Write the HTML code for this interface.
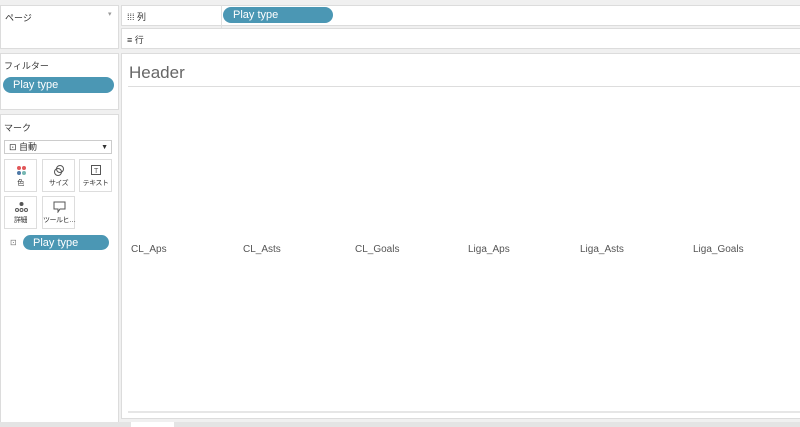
<!DOCTYPE html>
<html><head><meta charset="utf-8"><style>
body{margin:0;width:800px;height:427px;background:#f0f0f0;position:relative;overflow:hidden;font-family:"Liberation Sans","Noto Sans CJK JP",sans-serif;color:#333}
.b{position:absolute;background:#fff;border:1px solid #dcdcdc;box-sizing:border-box}
.pill{position:absolute;background:#4b97b4;color:#fff;border-radius:9px;font-size:11px;height:16px;line-height:16px;padding-left:10px;box-sizing:border-box;display:flex;align-items:center}
.t{position:absolute;font-size:9px;color:#333;white-space:nowrap}
.card{position:absolute;width:33px;height:33px;background:#fff;border:1px solid #ddd;box-sizing:border-box;font-size:7px;text-align:center}
.card span{position:absolute;left:0;right:0;bottom:3px;white-space:nowrap;font-size:7px;letter-spacing:-0.5px}
.lab{position:absolute;top:244px;font-size:10px;color:#555}
</style></head><body>
<div class="b" style="left:0;top:5px;width:119px;height:44px"></div>
<div class="t" style="left:5px;top:11px">ページ</div>
<div class="t" style="left:108px;top:10px;font-size:7px;color:#999">▾</div>
<div class="b" style="left:0;top:53px;width:119px;height:57px"></div>
<div class="t" style="left:4px;top:59px">フィルター</div>
<div class="pill" style="left:3px;top:77px;width:111px">Play type</div>
<div class="b" style="left:0;top:114px;width:119px;height:310px"></div>
<div class="t" style="left:4px;top:121px">マーク</div>
<div style="position:absolute;left:4px;top:140px;width:108px;height:14px;border:1px solid #ccc;background:#fff;box-sizing:border-box;font-size:9px;line-height:12px;padding-left:4px">⊡ 自動<span style="position:absolute;right:3px;top:1px;font-size:7px">▼</span></div>
<div class="card" style="left:4px;top:159px"><svg style="position:absolute;left:11px;top:5px" width="11" height="11"><circle cx="3" cy="3" r="2" fill="#e15759"/><circle cx="8" cy="3" r="2" fill="#e15759"/><circle cx="3" cy="8" r="2" fill="#4e79a7"/><circle cx="8" cy="8" r="2" fill="#76b7b2"/></svg><span>色</span></div>
<div class="card" style="left:42px;top:159px"><svg style="position:absolute;left:10px;top:4px" width="13" height="13" fill="none" stroke="#555"><circle cx="7" cy="5" r="3.5"/><circle cx="5" cy="8" r="3.5"/></svg><span>サイズ</span></div>
<div class="card" style="left:79px;top:159px"><svg style="position:absolute;left:11px;top:5px" width="11" height="11" fill="none" stroke="#555"><rect x="0.5" y="0.5" width="9" height="9"/><text x="3" y="8" font-size="7" fill="#555" stroke="none">T</text></svg><span>テキスト</span></div>
<div class="card" style="left:4px;top:196px"><svg style="position:absolute;left:10px;top:5px" width="13" height="11" fill="none" stroke="#555"><circle cx="6.5" cy="2" r="1.5" fill="#555"/><circle cx="2" cy="8" r="1.5"/><circle cx="6.5" cy="8" r="1.5"/><circle cx="11" cy="8" r="1.5"/></svg><span>詳細</span></div>
<div class="card" style="left:42px;top:196px"><svg style="position:absolute;left:10px;top:4px" width="13" height="12" fill="none" stroke="#555"><path d="M1 1h11v7H7l-2 3V8H1z"/></svg><span>ツールヒ…</span></div>
<div class="t" style="left:10px;top:238px;font-size:8px;color:#777">⊡</div>
<div class="pill" style="left:23px;top:235px;width:86px;height:15px">Play type</div>
<div class="b" style="left:121px;top:5px;width:680px;height:21px"></div>
<div style="position:absolute;left:221px;top:5px;width:1px;height:43px;background:#e0e0e0"></div>
<div class="t" style="left:127px;top:10px">⁞⁞⁞ 列</div>
<div class="pill" style="left:223px;top:7px;width:110px">Play type</div>
<div class="b" style="left:121px;top:28px;width:680px;height:21px"></div>
<div class="t" style="left:127px;top:33px">≡ 行</div>
<div class="b" style="left:121px;top:53px;width:680px;height:366px"></div>
<div style="position:absolute;left:129px;top:63px;font-size:17px;color:#666">Header</div>
<div style="position:absolute;left:128px;top:86px;width:672px;height:1px;background:#ddd"></div>
<div style="position:absolute;left:128px;top:411px;width:672px;height:2px;background:#e6e6e6"></div>
<div class="lab" style="left:131px">CL_Aps</div>
<div class="lab" style="left:243px">CL_Asts</div>
<div class="lab" style="left:355px">CL_Goals</div>
<div class="lab" style="left:468px">Liga_Aps</div>
<div class="lab" style="left:580px">Liga_Asts</div>
<div class="lab" style="left:693px">Liga_Goals</div>
<div style="position:absolute;left:0;top:422px;width:800px;height:5px;background:#e4e4e4"></div>
<div style="position:absolute;left:131px;top:422px;width:43px;height:5px;background:#fff"></div>
</body></html>
